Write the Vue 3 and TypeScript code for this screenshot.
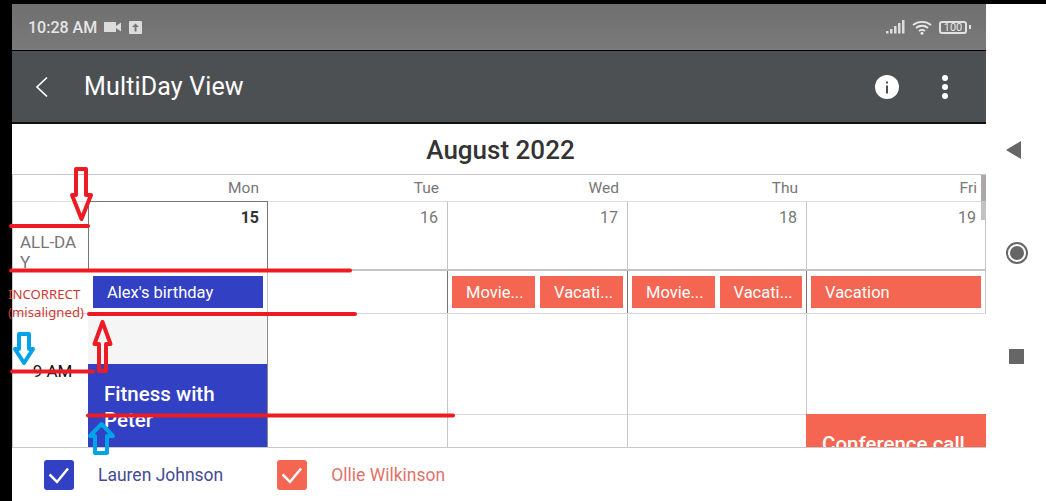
<script setup lang="ts">
interface DayHead {
  name: string;
  num: number;
}

interface AllDayItem {
  title: string;
}

const days: DayHead[] = [
  { name: 'Mon', num: 15 },
  { name: 'Tue', num: 16 },
  { name: 'Wed', num: 17 },
  { name: 'Thu', num: 18 },
  { name: 'Fri', num: 19 },
];

const allDay: AllDayItem[][] = [
  [{ title: "Alex's birthday" }],
  [],
  [{ title: 'Movie...' }, { title: 'Vacati...' }],
  [{ title: 'Movie...' }, { title: 'Vacati...' }],
  [{ title: 'Vacation' }],
];
</script>

<template>
  <div class="screen">
    <div class="device">
      <div class="status-bar">
        <span class="clock">10:28 AM</span>
        <svg class="st-cam" width="17" height="10" viewBox="0 0 17 10">
          <rect x="0" y="0" width="12" height="10" fill="#dcdcdc" />
          <path d="M12 4 L17 0.5 V9.5 L12 6 Z" fill="#dcdcdc" />
        </svg>
        <svg class="st-up" width="13" height="13" viewBox="0 0 13 13">
          <rect width="13" height="13" rx="1" fill="#dcdcdc" />
          <path d="M6.500 2.500 L10 6 H7.500 V10.500 H5.500 V6 H3 Z" fill="#777" />
        </svg>
        <span class="grow"></span>
        <svg width="19" height="14" viewBox="0 0 19 14">
          <rect x="0" y="11" width="2.500" height="2.500" fill="#dcdcdc" />
          <rect x="4" y="9" width="2.500" height="4.500" fill="#dcdcdc" />
          <rect x="8" y="6" width="2.500" height="7.500" fill="#dcdcdc" />
          <rect x="12" y="3" width="2.500" height="10.500" fill="#dcdcdc" />
          <rect x="16" y="0" width="2.500" height="13.500" fill="#dcdcdc" />
        </svg>
        <svg class="st-wifi" width="20" height="15" viewBox="0 0 20 15" fill="none" stroke="#e8e8e8" stroke-width="1.800">
          <path d="M1 5 C6 0.800 14 0.800 19 5" />
          <path d="M4 8 C7.500 5 12.500 5 16 8" />
          <path d="M7 11 C8.800 9.600 11.200 9.600 13 11" />
          <circle cx="10" cy="13.300" r="1.500" fill="#e8e8e8" stroke="none" />
        </svg>
        <span class="battery"><span class="battery-num">100</span></span>
        <span class="battery-tip"></span>
      </div>
      <div class="toolbar">
        <svg class="back" width="13" height="22" viewBox="0 0 13 22" fill="none" stroke="#fff" stroke-width="1.700">
          <path d="M12 1.500 L2 11 L12 20.500" />
        </svg>
        <span class="title">MultiDay View</span>
        <span class="grow"></span>
        <svg class="info" width="24" height="24" viewBox="0 0 24 24">
          <circle cx="12" cy="12" r="12" fill="#fff" />
          <rect x="11" y="10.500" width="2" height="8" fill="#4d5053" />
          <rect x="11" y="6.500" width="2" height="2" fill="#4d5053" />
        </svg>
        <span class="dots"><i></i><i></i><i></i></span>
      </div>
      <div class="calendar">
        <div class="month">August 2022</div>
        <div class="board">
          <div class="scroll-thumb"></div>
          <div class="head-row">
            <div class="corner"></div>
            <div v-for="d in days" :key="d.name" class="head-cell">{{ d.name }}</div>
          </div>
          <div class="date-row">
            <div class="all-day-label"><span>ALL-DAY</span></div>
            <div
              v-for="d in days"
              :key="d.num"
              class="date-cell"
              :class="{ today: d.num === 15 }"
            >
              {{ d.num }}
            </div>
          </div>
          <div class="allday-row">
            <div class="corner"></div>
            <div
              v-for="(items, i) in allDay"
              :key="i"
              class="allday-cell"
              :class="{ dark: i >= 1 && i <= 3 }"
            >
              <div
                v-for="(ev, j) in items"
                :key="j"
                class="chip"
                :class="i === 0 ? 'chip-blue' : 'chip-red'"
              >
                {{ ev.title }}
              </div>
            </div>
          </div>
          <div class="time-row">
            <div class="time-col"><span class="hour">9 AM</span></div>
            <div class="day-col mon">
              <div class="off-hours"></div>
              <div class="event event-blue">Fitness with Peter</div>
            </div>
            <div class="day-col"></div>
            <div class="day-col"></div>
            <div class="day-col"></div>
            <div class="day-col fri">
              <div class="event event-red">Conference call</div>
            </div>
          </div>
        </div>
        <div class="legend">
          <span class="check check-blue">
            <svg width="20" height="18" viewBox="0 0 20 18" fill="none" stroke="#fff" stroke-width="2.500">
              <path d="M0.500 8.500 L8 16 L19 2.500" />
            </svg>
          </span>
          <span class="who who-blue">Lauren Johnson</span>
          <span class="check check-red">
            <svg width="20" height="18" viewBox="0 0 20 18" fill="none" stroke="#fff" stroke-width="2.500">
              <path d="M0.500 8.500 L8 16 L19 2.500" />
            </svg>
          </span>
          <span class="who who-red">Ollie Wilkinson</span>
        </div>
      </div>
    </div>

    <nav class="nav-rail">
      <span class="nav-back"></span>
      <span class="nav-home"></span>
      <span class="nav-stop"></span>
    </nav>

    <!-- hand-drawn markup on top of the screenshot -->
    <svg class="markup" width="1046" height="501" viewBox="0 0 1046 501" fill="none">
      <g stroke="#ed1c24" stroke-width="4" stroke-linecap="round">
        <path d="M11 226 H88" />
        <path d="M11 270.500 H350" />
        <path d="M89 314 H355" />
        <path d="M12 371.500 H93" />
        <path d="M88 415.500 H453" />
      </g>
      <g stroke="#ed1c24" stroke-width="4" stroke-linejoin="round">
        <path d="M76 169 H86 V195 H91 L81.500 219 L72 195 H76 Z" />
        <path d="M102.500 322 L110.500 344 H106 V371 H99 V344 H94.500 Z" />
      </g>
      <g stroke="#00a2e8" stroke-width="4" stroke-linejoin="round">
        <path d="M19 334 H29 V349 H33 L24 363 L15 349 H19 Z" />
        <path d="M101.500 424 L113 436 H107 V453 H95 V436 H90 Z" />
      </g>
    </svg>
    <div class="note">INCORRECT<br />(misaligned)</div>
  </div>
</template>

<style>
html,
body {
  margin: 0;
  background: #fff;
}
</style>

<style scoped>
.screen {
  position: relative;
  width: 1046px;
  height: 501px;
  overflow: hidden;
  display: flex;
  background: #000;
  font-family: Roboto, 'Liberation Sans', sans-serif;
}

.device {
  margin-left: 12px;
  margin-top: 4px;
  width: 974px;
  display: flex;
  flex-direction: column;
}

.grow {
  flex: 1;
}

.status-bar {
  height: 46px;
  flex: none;
  display: flex;
  align-items: center;
  padding: 0 15px 0 16px;
  background: linear-gradient(#6f6f6f, #7a7a7a);
  border-bottom: 1px solid #000;
  color: #e6e6e6;
}

.clock {
  font-size: 16px;
  font-weight: 500;
  margin-right: 7px;
}

.st-up {
  margin-left: 8px;
}

.st-wifi {
  margin-left: 7px;
}

.battery {
  margin-left: 7px;
  width: 28px;
  height: 13px;
  border: 2px solid #e2e2e2;
  border-radius: 3px;
  box-sizing: border-box;
  display: flex;
  align-items: center;
  justify-content: center;
}

.battery-num {
  font-size: 11px;
  line-height: 11px;
  color: #e6e6e6;
}

.battery-tip {
  width: 2px;
  height: 4px;
  background: #e2e2e2;
  margin-left: 2px;
}

.toolbar {
  height: 71px;
  flex: none;
  display: flex;
  align-items: center;
  padding: 0 38px 0 23px;
  background: #4d5053;
  border-bottom: 2px solid #111;
  color: #fff;
}

.title {
  margin-left: 36px;
  font-size: 25px;
  letter-spacing: 0.15px;
  line-height: 28px;
}

.dots {
  margin-left: 43px;
  display: flex;
  flex-direction: column;
  gap: 3px;
  width: 6px;
}

.dots i {
  display: block;
  width: 6px;
  height: 6px;
  border-radius: 50%;
  background: #fff;
}

.calendar {
  flex: 1;
  min-height: 0;
  background: #fff;
  display: flex;
  flex-direction: column;
}

.month {
  height: 50px;
  flex: none;
  text-align: center;
  font-size: 26px;
  font-weight: 500;
  line-height: 52px;
  color: #333;
  padding-left: 3px;
  box-sizing: border-box;
}

.board {
  position: relative;
  height: 274px;
  flex: none;
  display: flex;
  flex-direction: column;
  border-top: 1px solid #c8c8c8;
  border-bottom: 1px solid #c8c8c8;
  border-left: 1px solid #c8c8c8;
  box-sizing: border-box;
}

.scroll-thumb {
  position: absolute;
  right: 0;
  top: 0;
  width: 5px;
  height: 45px;
  background: linear-gradient(#a9a9a9 26px, #c2c2c2 26px);
}

.head-row,
.date-row,
.allday-row,
.time-row {
  display: grid;
  grid-template-columns: 76px 179px 180px 180px 179px 179px;
  flex: none;
}

.head-row {
  height: 26px;
  border-bottom: 1px solid #dcdcdc;
}

.head-cell {
  text-align: right;
  padding: 5px 9px 0 0;
  font-size: 15.500px;
  line-height: 16px;
  color: #777;
}

.date-row {
  height: 69px;
  border-bottom: 2px solid #c4c4c4;
  box-sizing: border-box;
}

.all-day-label {
  margin-top: 24px;
  padding: 6px 0 0 7px;
  font-size: 17px;
  line-height: 20px;
  color: #777;
  border-right: 1px solid #777;
  box-sizing: border-box;
  word-break: break-all;
}

.all-day-label span {
  display: block;
  width: 58px;
}

.date-cell {
  text-align: right;
  padding: 7px 9px 0 0;
  font-size: 16px;
  line-height: 18px;
  color: #777;
  border-right: 1px solid #c4c4c4;
  box-sizing: border-box;
}

.date-cell.today {
  font-weight: 700;
  color: #333;
  border-top: 1px solid #777;
  border-right: 1px solid #777;
  box-shadow: -1px 0 0 #777;
  margin-top: -1px;
  padding: 7px 8px 0 0;
}

.allday-row {
  height: 43px;
  border-bottom: 1px solid #d8d8d8;
  box-sizing: border-box;
}

.allday-cell {
  display: flex;
  gap: 5px;
  padding: 5px 4px;
  border-right: 1px solid #c4c4c4;
  box-sizing: border-box;
}

.allday-cell.dark {
  border-right-color: #777;
}

.chip {
  flex: 1;
  min-width: 0;
  font-size: 16.500px;
  line-height: 34px;
  height: 32px;
  color: #fff;
  padding-left: 14px;
  white-space: nowrap;
  overflow: hidden;
}

.chip-blue {
  background: #3240c4;
}

.chip-red {
  background: #f46652;
}

.time-row {
  height: 133px;
  overflow: hidden;
}

.time-col {
  display: flex;
  justify-content: center;
  border-right: 1px solid #c8c8c8;
}

.hour {
  margin-top: 47px;
  font-size: 17px;
  line-height: 20px;
  color: #111;
  padding-left: 4px;
}

.day-col {
  display: flex;
  flex-direction: column;
  border-right: 1px solid #c8c8c8;
  box-sizing: border-box;
  background: linear-gradient(#d8d8d8, #d8d8d8) 0 100px / 100% 1px no-repeat;
}

.day-col.fri {
  padding-top: 100px;
  margin-left: -1px;
  border-right: 0;
}

.day-col.mon {
  border-right-color: #8a8a8a;
  margin-left: -1px;
}

.off-hours {
  height: 50px;
  flex: none;
  background: #f5f5f5;
}

.event {
  flex: 1;
  font-size: 20.500px;
  font-weight: 500;
  color: #fff;
  padding: 0 16px;
  overflow: hidden;
}

.event-blue {
  background: #3240c4;
  line-height: 26px;
  padding-top: 17px;
}

.event-red {
  background: #f46652;
  line-height: 30px;
  padding-top: 15px;
  white-space: nowrap;
}

.legend {
  flex: 1;
  display: flex;
  align-items: center;
  padding-left: 32px;
  background: #fff;
}

.check {
  width: 30px;
  height: 30px;
  border-radius: 3px;
  display: flex;
  align-items: center;
  justify-content: center;
}

.check-blue {
  background: #3240c4;
}

.check-red {
  background: #f46652;
}

.who {
  font-size: 17.500px;
  margin-left: 24px;
}

.who-blue {
  color: #444a96;
  margin-right: 54px;
}

.who-red {
  color: #e0736a;
}

.nav-rail {
  flex: 1;
  background: #fff;
  margin-top: 4px;
  display: flex;
  flex-direction: column;
  align-items: center;
  padding-top: 137px;
  padding-left: 2px;
}

.nav-back {
  width: 0;
  height: 0;
  margin-right: 7px;
  border-top: 9px solid transparent;
  border-bottom: 9px solid transparent;
  border-right: 15px solid #666;
}

.nav-home {
  margin-top: 85px;
  width: 14px;
  height: 14px;
  border: 2px solid #fff;
  outline: 2px solid #666;
  background: #666;
  border-radius: 50%;
  box-sizing: content-box;
}

.nav-stop {
  margin-top: 87px;
  margin-right: 2px;
  width: 15px;
  height: 15px;
  background: #666;
}

.markup {
  position: absolute;
  left: 0;
  top: 0;
  pointer-events: none;
}

.note {
  position: absolute;
  left: 8px;
  top: 285px;
  font-size: 13.200px;
  line-height: 18px;
  color: #cf3a34;
  font-family: 'Noto Sans', sans-serif;
}
</style>
